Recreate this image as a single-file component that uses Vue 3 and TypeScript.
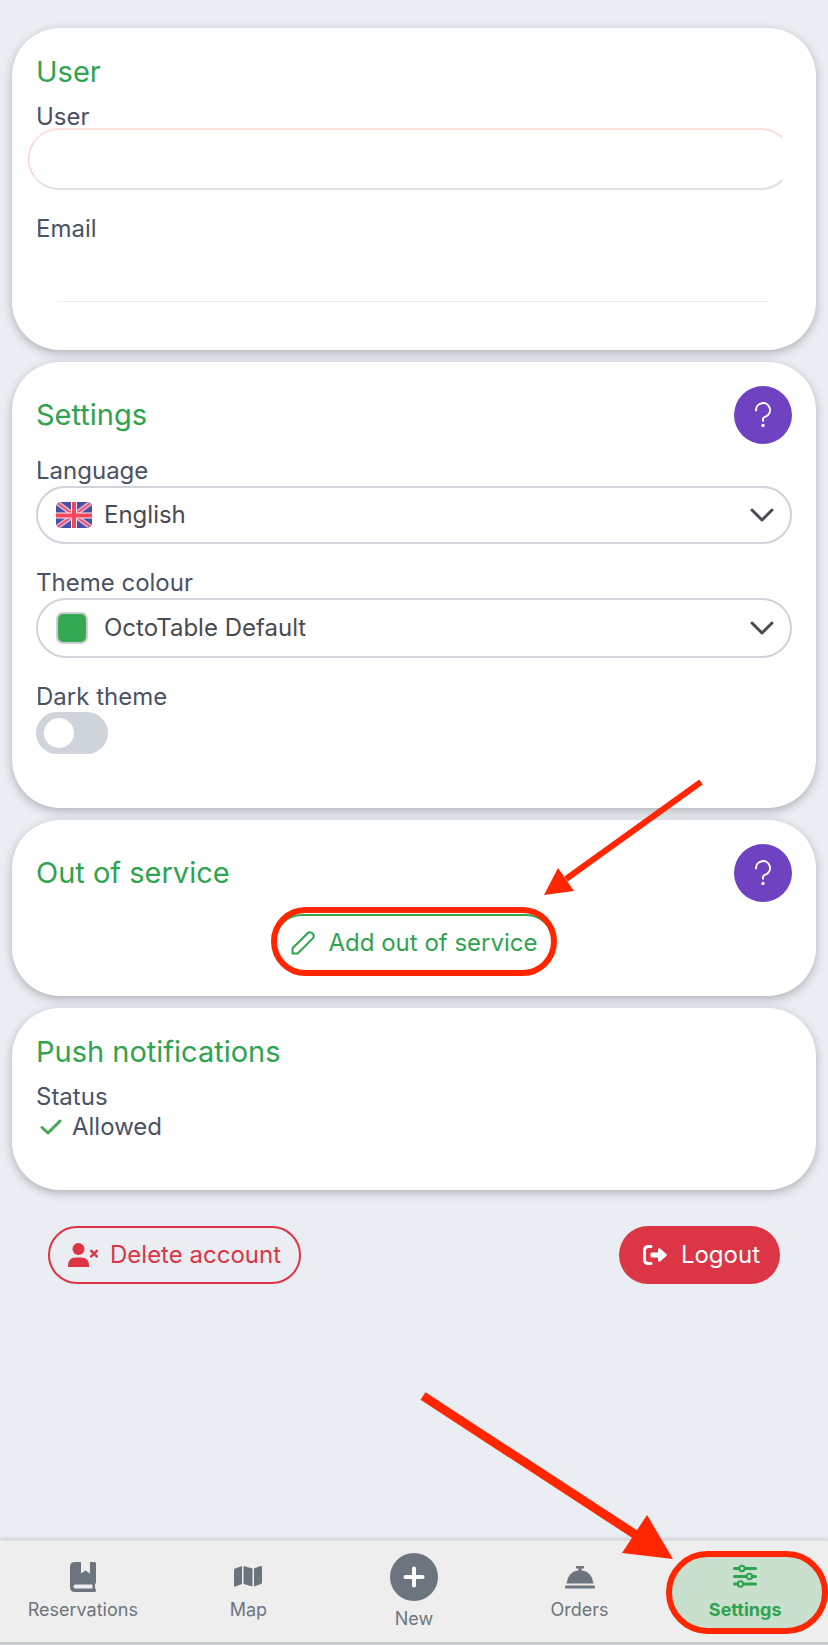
<script setup lang="ts">
import { ref } from 'vue'

interface NavItem {
  id: string
  label: string
}

const navItems: NavItem[] = [
  { id: 'reservations', label: 'Reservations' },
  { id: 'map', label: 'Map' },
  { id: 'new', label: 'New' },
  { id: 'orders', label: 'Orders' },
  { id: 'settings', label: 'Settings' },
]

const active = ref('settings')
const user = ref('')
const email = ref('')
const language = ref('English')
const theme = ref('OctoTable Default')
const dark = ref(false)
</script>

<template>
  <div class="page">
    <main class="content">
      <section class="card">
        <h2 class="title">User</h2>
        <div class="field">
          <label for="user">User</label>
          <input id="user" v-model="user" class="text-input highlighted" type="text" />
        </div>
        <div class="field">
          <label for="email">Email</label>
          <input id="email" v-model="email" class="text-input" type="email" />
        </div>
      </section>

      <section class="card">
        <header class="card-head">
          <h2 class="title">Settings</h2>
          <button class="help" type="button" aria-label="Help with settings">
            <svg viewBox="0 0 18 26" width="18" height="26">
              <path d="M2 8.500V8.200A7 7 0 1 1 12 14.400Q9 15.300 9 17.200V18.800" />
              <circle cx="9" cy="23.500" r="1.700" />
            </svg>
          </button>
        </header>
        <div class="field">
          <label for="language">Language</label>
          <div class="select-wrap">
            <svg class="lead flag" viewBox="0 0 36 26" width="36" height="26">
              <defs>
                <clipPath id="flag-clip"><rect width="36" height="26" rx="5" /></clipPath>
              </defs>
              <g clip-path="url(#flag-clip)">
                <rect width="36" height="26" fill="#4650a4" />
                <path d="M0 0L36 26M36 0L0 26" stroke="#e6b4cb" stroke-width="5" />
                <path d="M0 0L36 26M36 0L0 26" stroke="#e5587a" stroke-width="2" />
                <path d="M18 0V26M0 13.500H36" stroke="#ffe9ec" stroke-width="6" />
                <path d="M18 0V26M0 13.500H36" stroke="#f4455c" stroke-width="4" />
              </g>
            </svg>
            <select id="language" v-model="language">
              <option>English</option>
            </select>
            <svg class="chevron" viewBox="0 0 24 14" width="24" height="14">
              <path d="M2 2L12 12L22 2" />
            </svg>
          </div>
        </div>
        <div class="field">
          <label for="theme">Theme colour</label>
          <div class="select-wrap tall">
            <span class="lead swatch"></span>
            <select id="theme" v-model="theme">
              <option>OctoTable Default</option>
            </select>
            <svg class="chevron" viewBox="0 0 24 14" width="24" height="14">
              <path d="M2 2L12 12L22 2" />
            </svg>
          </div>
        </div>
        <div class="field">
          <label for="dark">Dark theme</label>
          <div class="toggle-row">
            <input id="dark" v-model="dark" class="toggle" type="checkbox" role="switch" />
          </div>
        </div>
      </section>

      <section class="card">
        <header class="card-head">
          <h2 class="title">Out of service</h2>
          <button class="help" type="button" aria-label="Help with out of service">
            <svg viewBox="0 0 18 26" width="18" height="26">
              <path d="M2 8.500V8.200A7 7 0 1 1 12 14.400Q9 15.300 9 17.200V18.800" />
              <circle cx="9" cy="23.500" r="1.700" />
            </svg>
          </button>
        </header>
        <div class="add-row">
          <div class="marked">
            <button class="btn outline-green" type="button">
              <svg viewBox="0 0 24 24" width="24" height="24">
                <path
                  d="M1.500 17.300L16.600 2.200A3.700 3.700 0 0 1 21.800 7.400L6.700 22.500H1.500Z"
                  fill="none"
                  stroke="currentColor"
                  stroke-width="2"
                  stroke-linejoin="round"
                />
              </svg>
              Add out of service
            </button>
            <svg class="arrow arrow-add" viewBox="0 0 164 120" width="164" height="120" aria-hidden="true">
              <path d="M160 4L25 101" stroke-width="6" />
              <path class="head" d="M3 117L17 90L33 113Z" />
            </svg>
          </div>
        </div>
      </section>

      <section class="card">
        <h2 class="title">Push notifications</h2>
        <div class="field">
          <div class="line">Status</div>
          <div class="line allowed">
            <svg viewBox="0 0 22 16" width="22" height="16">
              <path
                d="M2 8.500L8 14L20 2"
                fill="none"
                stroke="#43a84f"
                stroke-width="3"
                stroke-linecap="round"
                stroke-linejoin="round"
              />
            </svg>
            Allowed
          </div>
        </div>
      </section>

      <div class="actions">
        <button class="btn outline-red" type="button">
          <svg viewBox="0 0 30 26" width="30" height="26" fill="currentColor">
            <circle cx="10.500" cy="7" r="6" />
            <path d="M0 25V23.500Q0 15.500 8 15.500H13Q21 15.500 21 23.500V25Z" />
            <path
              d="M23.200 8.800L28.800 14.400M28.800 8.800L23.200 14.400"
              stroke="currentColor"
              stroke-width="2.400"
              stroke-linecap="round"
            />
          </svg>
          Delete account
        </button>
        <button class="btn solid-red" type="button">
          <svg viewBox="0 0 24 20" width="24" height="20">
            <path
              d="M8 1.500H5.500Q1.500 1.500 1.500 5.500V14.500Q1.500 18.500 5.500 18.500H8"
              fill="none"
              stroke="currentColor"
              stroke-width="3"
              stroke-linecap="round"
            />
            <path
              d="M9 7.500H15V4.500Q15.500 2.500 17.500 3.700L23.500 9.300Q24.200 10 23.500 10.700L17.500 16.300Q15.500 17.500 15 15.500V12.500H9Q7.500 12.500 7.500 11V9Q7.500 7.500 9 7.500Z"
              fill="currentColor"
            />
          </svg>
          Logout
        </button>
      </div>
    </main>

    <nav class="bottom-nav" aria-label="Main">
      <button
        v-for="item in navItems"
        :key="item.id"
        type="button"
        class="nav-item"
        :class="{ active: item.id === active }"
        @click="active = item.id"
      >
        <svg v-if="item.id === 'reservations'" viewBox="0 0 28 30" width="28" height="30" fill="currentColor">
          <path
            fill-rule="evenodd"
            d="M6 0H12V11.500L16.500 8.500L21 11.500V0H25.500Q27 0 27 1.500V20Q27 21.500 26 22V26.500Q27 27 27 28.500Q27 30 25.500 30H6Q1 30 1 25V5Q1 0 6 0ZM6.500 22.500Q4.500 22.500 4.500 24.500Q4.500 26.500 6.500 26.500H23.500V22.500Z"
          />
        </svg>
        <svg v-else-if="item.id === 'map'" viewBox="0 0 28 30" width="28" height="30" fill="currentColor">
          <path d="M0 8Q0 7 1 6.500L8 4V22L1.500 24.500Q0 25 0 23.500ZM9.500 4L18.500 6.500V24.500L9.500 22ZM20 6.500L26.500 4Q28 3.500 28 5V20.500Q28 21.500 27 22L20 24.500Z" />
        </svg>
        <svg v-else-if="item.id === 'new'" viewBox="0 0 48 48" width="48" height="48">
          <circle cx="24" cy="24" r="24" fill="currentColor" />
          <path d="M24 15.500V32.500M15.500 24H32.500" stroke="#fff" stroke-width="4" stroke-linecap="round" />
        </svg>
        <svg v-else-if="item.id === 'orders'" viewBox="0 0 30 30" width="30" height="30" fill="currentColor">
          <path d="M11.500 4H18.500Q19 4 19 5V6Q19 6.500 18.500 6.500H16.500V8.200Q27 9.500 28.500 21.500H1.500Q3 9.500 13.500 8.200V6.500H11.500Q11 6.500 11 6V5Q11 4 11.500 4Z" />
          <rect y="23.500" width="30" height="3" rx="1" />
        </svg>
        <svg v-else viewBox="0 0 24 30" width="24" height="30" fill="none" stroke="currentColor">
          <path d="M1.500 6.500H6M12 6.500H22.500M1.500 14.500H13M19 14.500H22.500M1.500 22H4.500M11 22H22.500" stroke-width="3" stroke-linecap="round" />
          <circle cx="9" cy="6.500" r="2.700" stroke-width="2" />
          <circle cx="16.500" cy="14.500" r="2.700" stroke-width="2" />
          <circle cx="7.500" cy="22" r="2.700" stroke-width="2" />
        </svg>
        <span>{{ item.label }}</span>
        <svg
          v-if="item.id === 'settings'"
          class="arrow arrow-nav"
          viewBox="0 0 260 176"
          width="260"
          height="176"
          aria-hidden="true"
        >
          <path d="M7 10L220 149" stroke-width="9" />
          <path class="head" d="M257 173L231 129L206 167Z" />
        </svg>
      </button>
    </nav>
  </div>
</template>

<style>
body {
  background: #eaedf2;
}
</style>

<style scoped>
.page {
  display: flex;
  flex-direction: column;
  min-height: 100vh;
  overflow: hidden;
  background: #eaedf2;
  color: #4a5266;
  font-family: Inter, 'Noto Sans', sans-serif;
  font-size: 24px;
  line-height: 30px;
}

.page *,
.page *::after {
  box-sizing: border-box;
}

button,
input,
select {
  margin: 0;
  font: inherit;
  color: inherit;
}

button {
  cursor: pointer;
}

svg {
  flex: none;
}

.content {
  display: flex;
  flex-direction: column;
  gap: 12px;
  padding: 28px 12px;
}

.card {
  padding: 24px;
  border-radius: 48px;
  background: #fff;
  box-shadow: 0 3px 10px rgba(40, 40, 50, 0.3);
}

.title {
  margin: 0 0 10px;
  color: #2fa34f;
  font-size: 29px;
  font-weight: 400;
  line-height: 40px;
}

.card-head {
  display: flex;
  align-items: center;
  justify-content: space-between;
  margin-bottom: 12px;
}

.card-head .title {
  margin: 0;
}

.help {
  display: flex;
  align-items: center;
  justify-content: center;
  width: 58px;
  height: 58px;
  padding: 0;
  border: 0;
  border-radius: 50%;
  background: #6f42c1;
}

.help path {
  fill: none;
  stroke: #fff;
  stroke-width: 2;
  stroke-linecap: round;
}

.help circle {
  fill: #fff;
}

.field {
  display: flex;
  flex-direction: column;
  margin-bottom: 24px;
}

.text-input {
  height: 58px;
  padding: 0 20px;
  border: 0;
  background: linear-gradient(90deg, transparent 18px, #e6e9ec 28px calc(100% - 28px), transparent calc(100% - 18px))
    bottom / 100% 1px no-repeat;
  outline: none;
}

.text-input.highlighted {
  height: 62px;
  margin: -4px 0 0 -8px;
  border: 2px solid;
  border-color: #fcdfdb #fdfdfd #dee0e5 #fbc9c2;
  border-left-width: 1px;
  border-radius: 31px;
  background: transparent;
}

.select-wrap {
  position: relative;
  display: flex;
  height: 58px;
}

.select-wrap.tall {
  height: 60px;
}

.select-wrap select {
  flex: 1;
  min-width: 0;
  padding: 0 60px 0 66px;
  border: 2px solid #ced4da;
  border-radius: 30px;
  background: transparent;
  color: #484b50;
  appearance: none;
  outline: none;
}

.lead,
.chevron {
  position: absolute;
  top: 50%;
  transform: translateY(-50%);
  pointer-events: none;
}

.lead {
  left: 20px;
}

.swatch {
  width: 32px;
  height: 32px;
  border: 2px solid #ccd0d2;
  border-radius: 7px;
  background: #34a853;
}

.chevron {
  right: 18px;
}

.chevron path {
  fill: none;
  stroke: #484b50;
  stroke-width: 3;
  stroke-linecap: round;
  stroke-linejoin: round;
}

.toggle-row {
  height: 48px;
}

.toggle {
  display: flex;
  align-items: center;
  width: 72px;
  height: 42px;
  padding: 0 8px;
  border-radius: 21px;
  background: #ced4da;
  appearance: none;
}

.toggle::after {
  content: '';
  width: 30px;
  height: 30px;
  border-radius: 50%;
  background: #fff;
}

.toggle:checked {
  justify-content: flex-end;
  background: #34a853;
}

.add-row {
  display: flex;
  justify-content: center;
}

.marked {
  position: relative;
}

.marked::after {
  content: '';
  position: absolute;
  inset: -7px -2px -4px;
  border: 6px solid #ff2600;
  border-radius: 36px;
  pointer-events: none;
}

.btn {
  display: flex;
  align-items: center;
  height: 58px;
  border: 2px solid transparent;
  border-radius: 29px;
  background: transparent;
  white-space: nowrap;
}

.outline-green {
  gap: 14px;
  padding: 0 16px;
  border-color: #34a853;
  color: #2fa34f;
}

.outline-red {
  gap: 12px;
  padding: 0 18px;
  border-color: #dc3545;
  color: #dc3545;
}

.solid-red {
  gap: 14px;
  padding: 0 18px 0 22px;
  background: #dc3545;
  color: #fff;
}

.allowed {
  display: flex;
  align-items: center;
  gap: 10px;
  padding-left: 4px;
}

.actions {
  display: flex;
  justify-content: space-between;
  gap: 16px;
  margin-top: 24px;
  padding: 0 36px;
}

.arrow {
  position: absolute;
  z-index: 1;
  fill: none;
  stroke: #ff2600;
  pointer-events: none;
}

.arrow .head {
  fill: #ff2600;
  stroke: none;
}

.arrow-add {
  bottom: calc(100% + 16px);
  left: calc(100% - 14px);
}

.arrow-nav {
  right: 152px;
  bottom: 69px;
}

.bottom-nav {
  display: flex;
  margin-top: auto;
  padding: 10px 0 11px;
  border-top: 1px solid #dcdfe3;
  border-bottom: 3px solid #c6c9ce;
  background: #eee;
  box-shadow: 0 -1px 4px rgba(60, 70, 80, 0.2);
}

.nav-item {
  position: relative;
  display: flex;
  flex: 1 1 0;
  flex-direction: column;
  align-items: center;
  justify-content: center;
  gap: 7px;
  min-width: 0;
  height: 80px;
  padding: 0;
  border: 0;
  background: transparent;
  color: #6c757d;
  font-size: 18px;
  line-height: 22px;
}

.nav-item.active {
  color: #2fa34f;
  font-weight: 700;
}

.nav-item > * {
  z-index: 1;
}

.nav-item.active::after {
  content: '';
  position: absolute;
  inset: 0 0 -3px 4px;
  border: 6px solid #ff2600;
  border-radius: 42px;
  background: #c9e0cf;
}
</style>
